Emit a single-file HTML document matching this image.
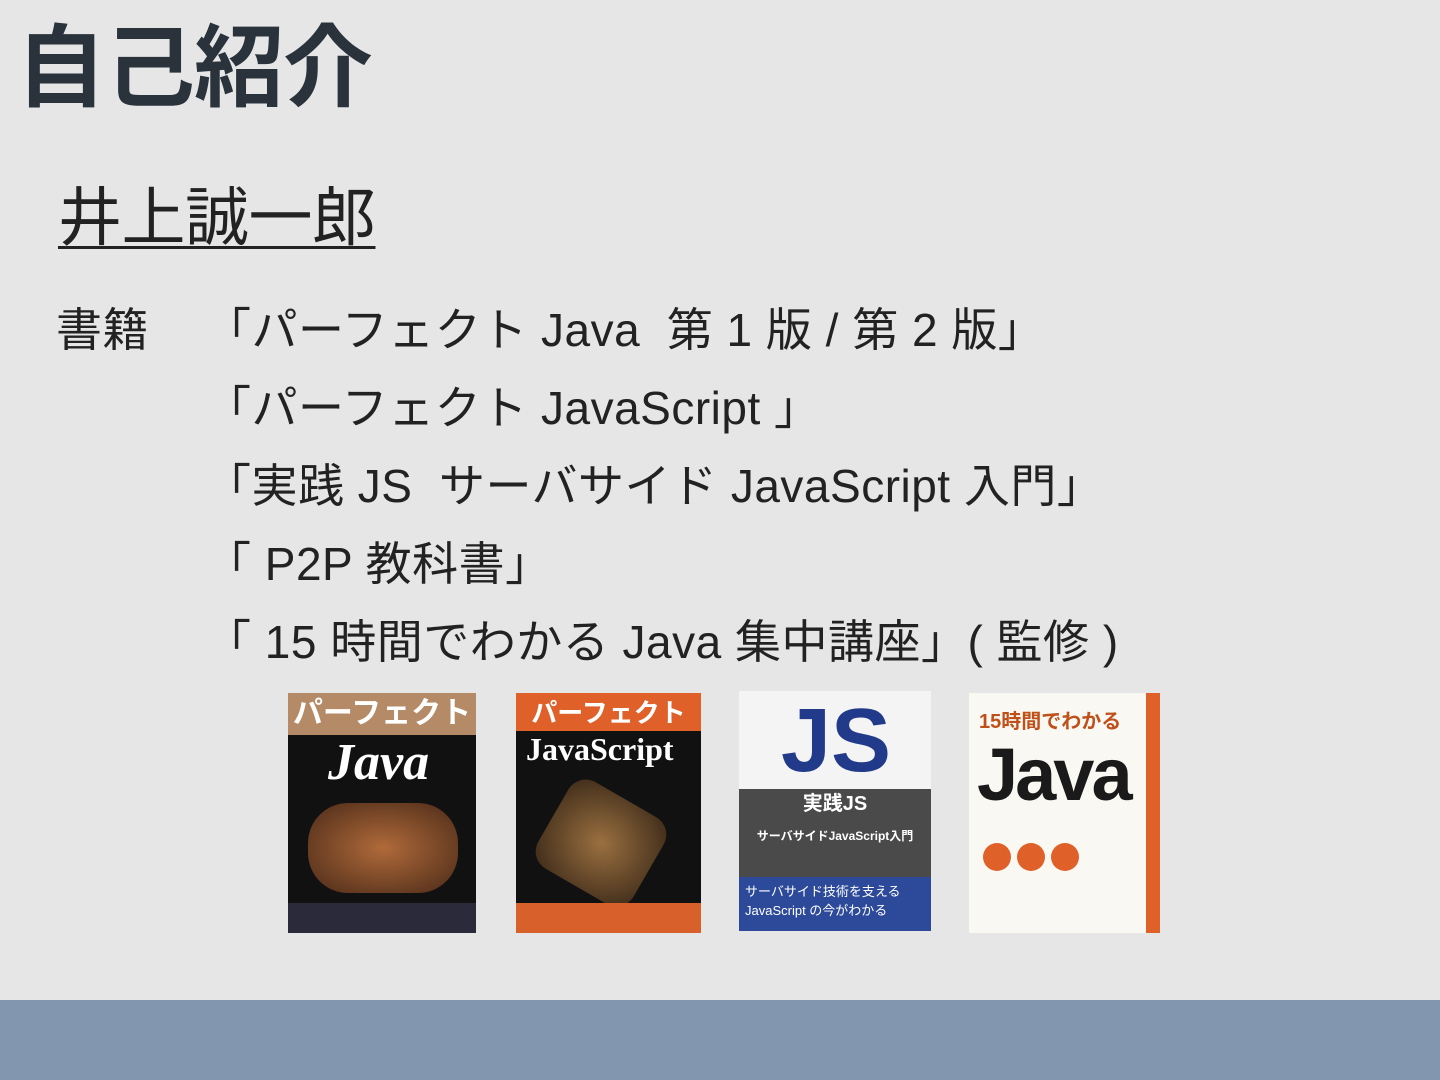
<!DOCTYPE html>
<html><head><meta charset="utf-8">
<style>
html,body{margin:0;padding:0}
body{width:1440px;height:1080px;background:#e6e6e6;position:relative;overflow:hidden;font-family:"Liberation Sans","Noto Sans CJK JP",sans-serif;color:#222}
.t{position:absolute;left:16px;top:14px;font-size:90px;font-weight:bold;color:#2a323c;letter-spacing:-1px;line-height:110px}
.n{position:absolute;left:58px;top:178px;font-size:64px;line-height:80px;text-decoration:underline;text-decoration-thickness:3px;text-underline-offset:6px;color:#222;letter-spacing:-0.5px}
.l{position:absolute;font-size:46px;line-height:60px;white-space:nowrap;color:#222;letter-spacing:0.5px}
.bar{position:absolute;left:0;top:1000px;width:1440px;height:80px;background:#8396b0}
.b{position:absolute;overflow:hidden}
</style></head><body>
<div class="t">自己紹介</div>
<div class="n">井上誠一郎</div>
<div class="l" style="left:56px;top:300px">書籍</div>
<div class="l" style="left:205px;top:300px">「パーフェクト Java&nbsp; 第 1 版 / 第 2 版」</div>
<div class="l" style="left:205px;top:378px">「パーフェクト JavaScript 」</div>
<div class="l" style="left:205px;top:456px">「実践 JS&nbsp; サーバサイド JavaScript 入門」</div>
<div class="l" style="left:205px;top:534px">「 P2P 教科書」</div>
<div class="l" style="left:205px;top:612px">「 15 時間でわかる Java 集中講座」( 監修 )</div>

<div class="b" style="left:288px;top:693px;width:188px;height:240px;background:#111">
 <div style="height:42px;background:#b58a66;color:#fff;font-weight:bold;font-size:30px;text-align:center;line-height:42px">パーフェクト</div>
 <div style="color:#fff;font-family:'Liberation Serif',serif;font-style:italic;font-weight:bold;font-size:52px;position:absolute;left:40px;top:40px">Java</div>
 <div style="position:absolute;left:20px;top:110px;width:150px;height:90px;border-radius:40px;background:radial-gradient(#b06a3a,#4a2a18)"></div>
 <div style="position:absolute;left:0;bottom:0;width:188px;height:30px;background:#2a2a3a"></div>
</div>
<div class="b" style="left:516px;top:693px;width:185px;height:240px;background:#111">
 <div style="height:38px;background:#e0602a;color:#fff;font-weight:bold;font-size:26px;text-align:center;line-height:40px">パーフェクト</div>
 <div style="color:#fff;font-family:'Liberation Serif',serif;font-weight:bold;font-size:32px;position:absolute;left:10px;top:38px">JavaScript</div>
 <div style="position:absolute;left:30px;top:100px;width:110px;height:100px;transform:rotate(30deg);border-radius:20px;background:radial-gradient(#9a7040,#3a2818)"></div>
 <div style="position:absolute;left:0;bottom:0;width:185px;height:30px;background:#d8602a"></div>
</div>
<div class="b" style="left:739px;top:691px;width:192px;height:240px;background:#f4f4f4">
 <div style="position:absolute;left:42px;top:0;color:#223a8a;font-weight:bold;font-size:90px;line-height:100px">JS</div>
 <div style="position:absolute;left:0;top:98px;width:192px;height:88px;background:#4a4a4a;color:#fff;text-align:center;font-weight:bold;font-size:20px;line-height:30px">実践JS<br><span style="font-size:12px">サーバサイドJavaScript入門</span></div>
 <div style="position:absolute;left:0;top:186px;width:192px;height:54px;background:#2d4a9a;color:#fff;font-size:13px;padding:4px 6px;box-sizing:border-box">サーバサイド技術を支える<br>JavaScript の今がわかる</div>
</div>
<div class="b" style="left:969px;top:693px;width:191px;height:240px;background:#faf8f2">
 <div style="position:absolute;right:0;top:0;width:14px;height:240px;background:#e0602a"></div>
 <div style="position:absolute;left:10px;top:12px;font-size:20px;font-weight:bold;color:#c0501a">15時間でわかる</div>
 <div style="position:absolute;left:8px;top:40px;font-size:74px;font-weight:bold;color:#1a1a1a;letter-spacing:-3px;line-height:84px">Java</div>
 <div style="position:absolute;left:14px;top:150px;width:28px;height:28px;border-radius:50%;background:#e0602a"></div>
 <div style="position:absolute;left:48px;top:150px;width:28px;height:28px;border-radius:50%;background:#e0602a"></div>
 <div style="position:absolute;left:82px;top:150px;width:28px;height:28px;border-radius:50%;background:#e0602a"></div>
</div>
<div class="bar"></div>
</body></html>
